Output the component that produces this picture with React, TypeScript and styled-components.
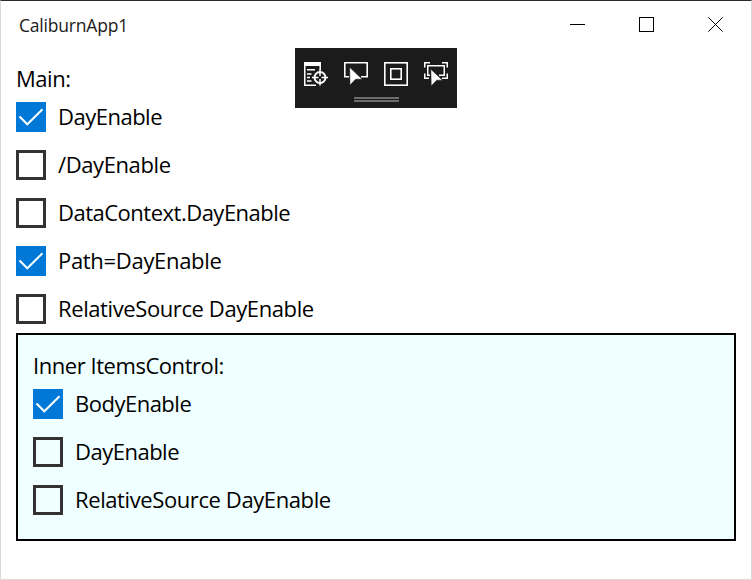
import React, { useState } from "react";
import styled, { createGlobalStyle } from "styled-components";

const GlobalStyle = createGlobalStyle`
  * { box-sizing: border-box; }
  body { margin: 0; background: #fff; }
`;

const Window = styled.div`
  position: relative;
  width: 752px;
  height: 580px;
  display: flex;
  flex-direction: column;
  background: #fff;
  border: 1px solid #d9d9d9;
  border-top-color: #2b2b2b;
  color: #000;
  font-family: "Open Sans", "Noto Sans", sans-serif;
  overflow: hidden;
`;

const TitleBar = styled.header`
  height: 47px;
  flex: none;
  display: flex;
  justify-content: space-between;
  padding: 0 1px 0 18px;
`;

const Title = styled.div`
  font-size: 17.5px;
  line-height: 48px;
  letter-spacing: -0.2px;
  color: #1a1a1a;
`;

const Controls = styled.div`
  display: flex;
`;

const ControlButton = styled.button`
  width: 69px;
  height: 47px;
  padding: 0;
  border: 0;
  background: none;
  display: flex;
  align-items: center;
  justify-content: center;
`;

const DebugBar = styled.div`
  position: absolute;
  left: 294px;
  top: 47px;
  width: 162px;
  height: 60px;
  padding: 14px 9px 0;
  background: #1b1b1b;
`;

const Tools = styled.div`
  display: flex;
  gap: 16px;
  svg { display: block; }
`;

const Grip = styled.div`
  width: 45px;
  height: 5px;
  margin: 11px auto 0 50px;
  border: solid #6e6e6e;
  border-width: 2px 0;
`;

const Content = styled.main`
  padding: 15px 15px 0;
`;

const Heading = styled.div`
  height: 30px;
  font-size: 22px;
  line-height: 31px;
  letter-spacing: -0.45px;
  white-space: nowrap;
`;

const Row = styled.label`
  height: 48px;
  display: flex;
  align-items: center;
  gap: 12px;
`;

const Box = styled.span<{ $on: boolean }>`
  width: 30px;
  height: 30px;
  flex: none;
  border: ${(p) => (p.$on ? "0" : "3px solid #333")};
  background: ${(p) => (p.$on ? "#0078d7" : "transparent")};
  svg { display: block; }
`;

const HiddenInput = styled.input`
  appearance: none;
  position: absolute;
  width: 0;
  height: 0;
  margin: 0;
`;

const Label = styled.span<{ $tracking: number }>`
  padding-bottom: 2px;
  font-size: 22px;
  line-height: 30px;
  letter-spacing: ${(p) => p.$tracking}px;
  white-space: nowrap;
`;

const Panel = styled.section`
  height: 208px;
  padding: 15px;
  border: 2px solid #000;
  background: #f0ffff;
`;

interface CheckRowProps {
  text: string;
  initial?: boolean;
  tracking?: number;
}

function CheckRow({ text, initial = false, tracking = -0.5 }: CheckRowProps) {
  const [on, setOn] = useState(initial);
  return (
    <Row>
      <HiddenInput type="checkbox" checked={on} onChange={() => setOn(!on)} />
      <Box $on={on}>
        {on && (
          <svg width="30" height="30" fill="none" stroke="#fff" strokeWidth="2">
            <path d="M3.5 14.5L11.3 22.3L26.5 7.2" />
          </svg>
        )}
      </Box>
      <Label $tracking={tracking}>{text}</Label>
    </Row>
  );
}

export default function App() {
  return (
    <>
      <GlobalStyle />
      <Window>
        <TitleBar>
          <Title>CaliburnApp1</Title>
          <Controls>
            <ControlButton aria-label="Minimize">
              <svg width="15" height="15" shapeRendering="crispEdges"><path d="M0 7.5H15" stroke="#000" /></svg>
            </ControlButton>
            <ControlButton aria-label="Maximize">
              <svg width="15" height="15" fill="none" stroke="#000"><rect x=".5" y=".5" width="14" height="14" /></svg>
            </ControlButton>
            <ControlButton aria-label="Close">
              <svg width="15" height="15" stroke="#000"><path d="M.3 .3L14.7 14.7M14.7 .3L.3 14.7" /></svg>
            </ControlButton>
          </Controls>
        </TitleBar>
        <Content>
          <Heading>Main:</Heading>
          <CheckRow text="DayEnable" initial />
          <CheckRow text="/DayEnable" tracking={-0.4} />
          <CheckRow text="DataContext.DayEnable" />
          <CheckRow text="Path=DayEnable" initial tracking={-0.31} />
          <CheckRow text="RelativeSource DayEnable" tracking={-0.4} />
          <Panel>
            <Heading>Inner ItemsControl:</Heading>
            <CheckRow text="BodyEnable" initial />
            <CheckRow text="DayEnable" />
            <CheckRow text="RelativeSource DayEnable" tracking={-0.4} />
          </Panel>
        </Content>
        <DebugBar>
          <Tools>
            <svg width="24" height="24" fill="none" stroke="#fff" strokeWidth="1.5">
              <path d="M0 0H17V4H0Z" fill="#fff" stroke="none" />
              <path d="M.75 3V23.2H12M16.2 3V8M3 7.7H11M3 12H7.5M3 15.5H6M3 19H7.5" />
              <circle cx="16" cy="15.5" r="5.5" strokeWidth="2" />
              <path d="M16 7.5V14M16 17V23.5M8 15.5H14.5M17.5 15.5H24" />
            </svg>
            <svg width="24" height="24" fill="none" stroke="#fff" strokeWidth="1.6">
              <path d="M5 14.8H.8V.8H23.2V14.8H17" />
              <path d="M5.6 5.2L18.2 17.2H11.6L6 23.2Z" fill="#fff" stroke="#1b1b1b" strokeWidth=".6" />
            </svg>
            <svg width="24" height="24" fill="none" stroke="#fff" strokeWidth="1.6">
              <rect x=".8" y=".8" width="22.4" height="22.4" />
              <rect x="6.8" y="6.8" width="10.4" height="10.4" />
            </svg>
            <svg width="24" height="24" fill="none" stroke="#fff" strokeWidth="1.5">
              <path d="M.75 5.5V.75H6M18 .75H23.25V5.5M.75 11.5V16.2H5M23.25 11.5V16.2H18M6 13.2H3.75V3.75H20.25V13.2H15" />
              <path d="M6.8 7.2L18.6 18.2H12.8L7.2 24Z" fill="#fff" stroke="#1b1b1b" strokeWidth=".6" />
            </svg>
          </Tools>
          <Grip />
        </DebugBar>
      </Window>
    </>
  );
}
